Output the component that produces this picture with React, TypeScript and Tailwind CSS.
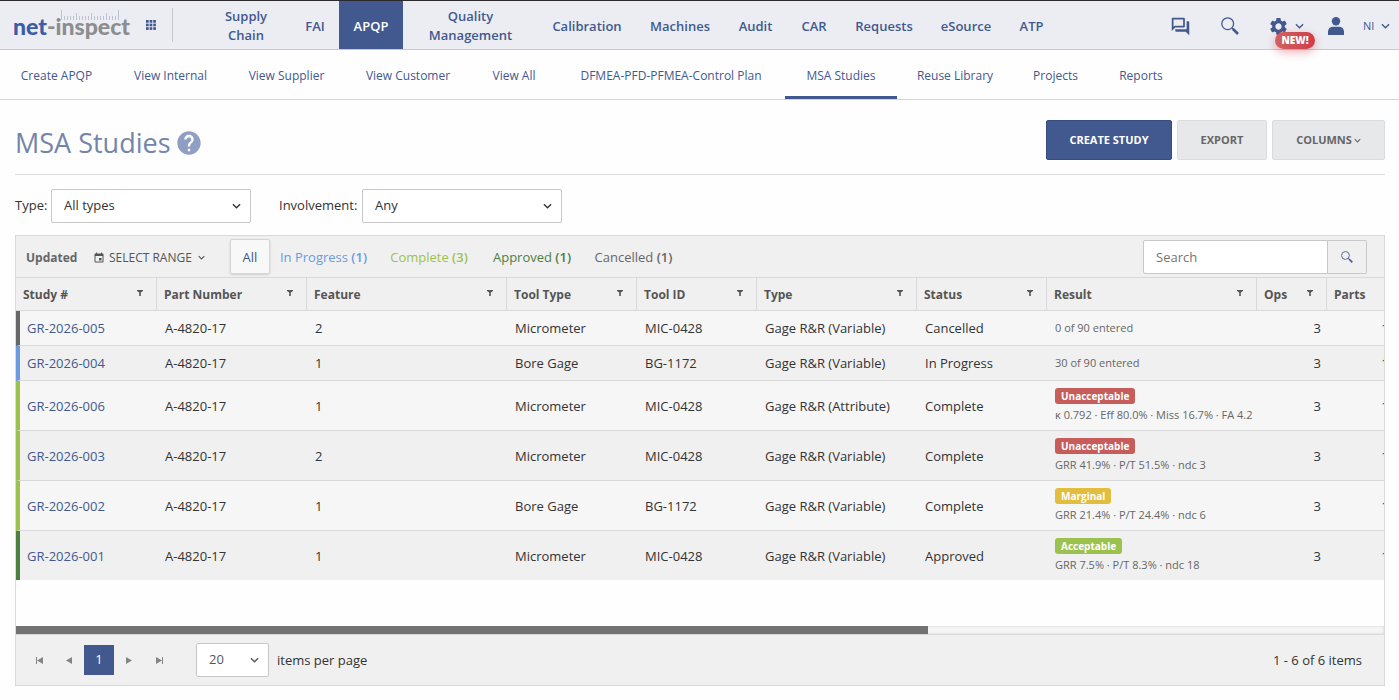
import { useState } from "react";
import clsx from "clsx";
import { MdEvent, MdHelp, MdOutlineQuestionAnswer, MdSettings } from "react-icons/md";

const mainNav = [
  { label: "Supply Chain", width: "w-[90px] px-5" },
  { label: "FAI", width: "w-12" },
  { label: "APQP", width: "w-16" },
  { label: "Quality Management", width: "w-[135px] px-5" },
  { label: "Calibration", width: "w-[98px]" },
  { label: "Machines", width: "w-[88px]" },
  { label: "Audit", width: "w-[63px]" },
  { label: "CAR", width: "w-[54px]" },
  { label: "Requests", width: "w-[86px]" },
  { label: "eSource", width: "w-[78px]" },
  { label: "ATP", width: "w-[53px]" },
];

const subNav = [
  { label: "Create APQP", width: "w-[113px]" },
  { label: "View Internal", width: "w-[115px]" },
  { label: "View Supplier", width: "w-[117px]" },
  { label: "View Customer", width: "w-[126px]" },
  { label: "View All", width: "w-[86px]" },
  { label: "DFMEA-PFD-PFMEA-Control Plan", width: "w-[228px]" },
  { label: "MSA Studies", width: "w-[112px]" },
  { label: "Reuse Library", width: "w-[116px]" },
  { label: "Projects", width: "w-[85px]" },
  { label: "Reports", width: "w-[86px]" },
];

const statusFilters = [
  { label: "All", count: null, style: "w-10 text-[#42598f]" },
  { label: "In Progress", count: 1, style: "w-[107px] text-[#6b9ade]" },
  { label: "Complete", count: 3, style: "w-[104px] text-[#9cc24e]" },
  { label: "Approved", count: 1, style: "w-[102px] text-[#4c803e]" },
  { label: "Cancelled", count: 1, style: "w-[101px] text-[#666666]" },
];

const columns = [
  { label: "Study #", width: "w-[140px]" },
  { label: "Part Number", width: "w-[150px]" },
  { label: "Feature", width: "w-[200px]" },
  { label: "Tool Type", width: "w-[130px]" },
  { label: "Tool ID", width: "w-[120px]" },
  { label: "Type", width: "w-[160px]" },
  { label: "Status", width: "w-[130px]" },
  { label: "Result", width: "w-[210px]" },
  { label: "Ops", width: "w-[70px]" },
  { label: "Parts", width: "w-[80px]" },
];

type Study = {
  id: string;
  feature: number;
  toolType: string;
  toolId: string;
  type: string;
  status: "Cancelled" | "In Progress" | "Complete" | "Approved";
  verdict?: "Unacceptable" | "Marginal" | "Acceptable";
  result: string;
};

const studies: Study[] = [
  { id: "GR-2026-005", feature: 2, toolType: "Micrometer", toolId: "MIC-0428", type: "Gage R&R (Variable)", status: "Cancelled", result: "0 of 90 entered" },
  { id: "GR-2026-004", feature: 1, toolType: "Bore Gage", toolId: "BG-1172", type: "Gage R&R (Variable)", status: "In Progress", result: "30 of 90 entered" },
  { id: "GR-2026-006", feature: 1, toolType: "Micrometer", toolId: "MIC-0428", type: "Gage R&R (Attribute)", status: "Complete", verdict: "Unacceptable", result: "κ 0.792 · Eff 80.0% · Miss 16.7% · FA 4.2" },
  { id: "GR-2026-003", feature: 2, toolType: "Micrometer", toolId: "MIC-0428", type: "Gage R&R (Variable)", status: "Complete", verdict: "Unacceptable", result: "GRR 41.9% · P/T 51.5% · ndc 3" },
  { id: "GR-2026-002", feature: 1, toolType: "Bore Gage", toolId: "BG-1172", type: "Gage R&R (Variable)", status: "Complete", verdict: "Marginal", result: "GRR 21.4% · P/T 24.4% · ndc 6" },
  { id: "GR-2026-001", feature: 1, toolType: "Micrometer", toolId: "MIC-0428", type: "Gage R&R (Variable)", status: "Approved", verdict: "Acceptable", result: "GRR 7.5% · P/T 8.3% · ndc 18" },
];

const statusBar = {
  Cancelled: "border-l-[#666666]",
  "In Progress": "border-l-[#6b9ade]",
  Complete: "border-l-[#9cc24e]",
  Approved: "border-l-[#4c803e]",
};

const verdictColor = {
  Unacceptable: "bg-[#c75d5b]",
  Marginal: "bg-[#e2bd3f]",
  Acceptable: "bg-[#9cc24e]",
};

function Chevron({ className }: { className?: string }) {
  return (
    <svg viewBox="0 0 10 6" fill="none" stroke="currentColor" strokeWidth="1.5" className={clsx("shrink-0", className)}>
      <path d="M1 1l4 4 4-4" />
    </svg>
  );
}

function SearchIcon({ className }: { className?: string }) {
  return (
    <svg viewBox="0 0 18 18" fill="none" stroke="currentColor" className={className}>
      <circle cx="6.7" cy="6.7" r="5.9" strokeWidth="1.3" />
      <path d="M11 11l1.6 1.6" strokeWidth="1.5" />
      <path d="M12 12l5 5" strokeWidth="2.6" />
    </svg>
  );
}

function FilterIcon() {
  return (
    <svg viewBox="0 0 6 6" fill="currentColor" className="h-[6px] w-[6px]">
      <path d="M0 0h6v1L3.800 2.600V6H2.200V2.600L0 1z" />
    </svg>
  );
}

function Logo() {
  return (
    <a href="#" aria-label="net-inspect" className="relative block w-[116px] pt-px font-['Lato','Open_Sans',sans-serif] text-[23px] leading-[26px] font-black whitespace-nowrap text-[#8b8d90]">
      <svg viewBox="0 0 60 10" shapeRendering="crispEdges" className="absolute top-[-2px] left-[47px] h-[10px] w-[60px] fill-[#bcc3d3]">
        {Array.from({ length: 20 }, (_, i) => {
          const h = i === 0 || i === 19 ? 10 : i % 5 === 0 ? 7 : 4;
          return <rect key={i} x={i * 3 + 1} y={10 - h} width="1" height={h} />;
        })}
      </svg>
      <span className="text-[#3c5ca8]">net</span>-inspect
    </a>
  );
}

function Header() {
  return (
    <header className="flex h-[50px] border-t border-b border-t-[#2d2a2e] border-b-[#c8c9cc] bg-[#ecedf3] text-[#42598f]">
      <div className="flex w-[201px] shrink-0 items-center pl-[13px]">
        <Logo />
        <button type="button" aria-label="Applications" className="ml-[17px]">
          <svg viewBox="0 0 10 10" fill="currentColor" className="h-[10px] w-[10px]">
            {[0, 1, 2].map((row) =>
              [0, 1, 2].map((col) => (
                <rect key={`${row}-${col}`} x={col * 3.6} y={row * 3.6} width="2.7" height="2.7" />
              ))
            )}
          </svg>
        </button>
        <span className="ml-4 h-[34px] w-px bg-[#c8c9cc]" />
      </div>
      <nav aria-label="Main" className="flex">
        {mainNav.map((item) => (
          <a
            key={item.label}
            href="#"
            className={clsx(
              "flex items-center justify-center pt-[2px] text-center text-[13px] leading-[19px] font-semibold",
              item.width,
              item.label === "APQP" && "bg-[#42598f] text-white"
            )}
          >
            {item.label}
          </a>
        ))}
      </nav>
      <div className="ml-auto flex shrink-0">
        <button type="button" aria-label="Messages" className="flex w-[50px] items-center justify-center pt-[2px]">
          <MdOutlineQuestionAnswer size={21} />
        </button>
        <button type="button" aria-label="Search" className="flex w-[50px] items-center justify-center pt-[2px]">
          <SearchIcon className="h-[18px] w-[18px]" />
        </button>
        <button type="button" aria-label="Settings" className="relative flex w-[58px] items-center justify-center gap-[6px] pt-[2px] pl-1">
          <MdSettings size={21} />
          <Chevron className="h-[6px] w-[9px]" />
          <span className="absolute top-[31px] left-[20px] z-10 flex h-[17px] w-10 items-center justify-center rounded-full bg-linear-to-r from-[#cf6361] to-[#d03a49] text-[10px] font-extrabold text-white shadow-[0_3px_10px_rgba(220,53,69,0.4)]">
            NEW!
          </span>
        </button>
        <button type="button" aria-label="Profile" className="flex w-[46px] items-center justify-center pt-[2px]">
          <svg viewBox="0 0 16 18" fill="currentColor" className="h-[18px] w-4">
            <circle cx="8" cy="4.2" r="4.2" />
            <path d="M0 18v-3c0-3.400 2.400-5.200 5-5.200h6c2.600 0 5 1.800 5 5.200v3z" />
          </svg>
        </button>
        <button type="button" className="flex w-10 items-center gap-[7px] pt-[2px] pl-1 text-[11px]">
          NI
          <Chevron className="h-[6px] w-[9px]" />
        </button>
      </div>
    </header>
  );
}

function SelectBox({ id, options, className }: { id: string; options: string[]; className: string }) {
  return (
    <div className={clsx("relative", className)}>
      <select id={id} className="h-[34px] w-full appearance-none rounded-[2px] border border-[#c8c8c8] bg-white pl-3 text-[13px]">
        {options.map((o) => (
          <option key={o}>{o}</option>
        ))}
      </select>
      <Chevron className="pointer-events-none absolute top-[14px] right-[10px] h-[6px] w-[9px]" />
    </div>
  );
}

function StudyTable() {
  const cell = "pt-[2px] pl-[9px]";

  return (
    <div className="h-[348px] overflow-hidden">
      <table className="w-[1390px] min-w-full table-fixed border-separate border-spacing-0 text-[13px]">
        <thead>
          <tr className="h-[33px]">
            {columns.map((col, i) => (
              <th
                key={col.label}
                className={clsx(
                  "border-b border-[#d9d9d9] bg-[#f0f0f0] p-0 text-left text-[12px] font-bold text-[#555555]",
                  col.width,
                  i > 0 && "border-l"
                )}
              >
                <div className="flex items-center justify-between pt-[2px] pr-[13px] pl-[7px]">
                  {col.label}
                  <button type="button" aria-label={`Filter ${col.label}`} className="pb-1">
                    <FilterIcon />
                  </button>
                </div>
              </th>
            ))}
          </tr>
        </thead>
        <tbody className="[&_td]:border-b [&_td]:border-b-[#d9d9d9] [&_td]:whitespace-nowrap [&_tr:last-child_td]:border-b-0">
          {studies.map((s) => (
            <tr key={s.id} className={clsx("odd:bg-[#f6f6f6] even:bg-[#f0f0f0] last:h-[49px]", s.verdict ? "h-[50px]" : "h-[35px]")}>
              <td className={clsx("border-l-4 pt-[2px] pl-[7px]", statusBar[s.status])}>
                <a href="#" className="text-[#42598f]">{s.id}</a>
              </td>
              <td className={cell}>A-4820-17</td>
              <td className={cell}>{s.feature}</td>
              <td className={cell}>{s.toolType}</td>
              <td className={cell}>{s.toolId}</td>
              <td className={cell}>{s.type}</td>
              <td className={cell}>{s.status}</td>
              <td className="overflow-hidden pl-[9px] text-[11px] text-[#666666]">
                {s.verdict && (
                  <span className={clsx("mb-[3px] block w-fit rounded-[3px] px-[6px] text-[10px] leading-4 font-bold text-white", verdictColor[s.verdict])}>
                    {s.verdict}
                  </span>
                )}
                <span className="block leading-4">{s.result}</span>
              </td>
              <td className="pt-[2px] pr-[5px] text-right">3</td>
              <td className="pt-[2px] pr-[10px] text-right">10</td>
            </tr>
          ))}
        </tbody>
      </table>
    </div>
  );
}

function PageButton({ label, d }: { label: string; d: string }) {
  return (
    <button type="button" aria-label={label} className="flex h-[30px] w-[30px] items-center justify-center text-[#858585]">
      <svg viewBox="0 0 7 7" fill="currentColor" className="h-[7px] w-[7px]">
        <path d={d} />
      </svg>
    </button>
  );
}

export default function App() {
  const [filter, setFilter] = useState("All");
  const [query, setQuery] = useState("");

  return (
    <div className="min-h-screen bg-[#fefefe] font-['Open_Sans','Noto_Sans',sans-serif] text-[13px] text-[#333333]">
      <Header />

      <nav aria-label="APQP" className="flex h-[50px] border-b border-[#d4d5d8] text-[12px] text-[#42598f]">
        {subNav.map((item) => (
          <a
            key={item.label}
            href="#"
            className={clsx(
              "flex items-center justify-center border-b-[3px] pt-[5px] whitespace-nowrap",
              item.width,
              item.label === "MSA Studies" ? "border-[#42598f]" : "border-transparent"
            )}
          >
            {item.label}
          </a>
        ))}
      </nav>

      <main className="pr-[14px] pl-[15px]">
        <div className="flex h-[75px] items-center justify-between border-b border-[#d9d9d9] pt-[6px]">
          <div className="flex items-center gap-1 pt-[6px]">
            <h1 className="text-[27px] text-[#7485aa]">MSA Studies</h1>
            <button type="button" aria-label="Help" className="text-[#8f9fc3]">
              <MdHelp size={28} />
            </button>
          </div>
          <div className="flex gap-[5px] text-[11px] font-bold">
            <button type="button" className="h-10 w-[126px] rounded-[2px] border border-[#384c7d] bg-[#42598f] text-white">
              CREATE STUDY
            </button>
            <button type="button" className="h-10 w-[90px] rounded-[2px] border border-[#dadbdd] bg-[#e7e8ea] text-[#666666]">
              EXPORT
            </button>
            <button type="button" className="flex h-10 w-[113px] items-center justify-center gap-[2px] rounded-[2px] border border-[#dadbdd] bg-[#e7e8ea] text-[#666666]">
              COLUMNS
              <Chevron className="h-[5px] w-[7px]" />
            </button>
          </div>
        </div>

        <div className="flex items-center pt-[14px] pb-3">
          <label htmlFor="study-type" className="w-9">Type:</label>
          <SelectBox id="study-type" options={["All types", "Variable", "Attribute"]} className="w-[200px]" />
          <label htmlFor="involvement" className="ml-7 w-[83px]">Involvement:</label>
          <SelectBox id="involvement" options={["Any", "Internal", "Supplier"]} className="w-[200px]" />
        </div>

        <section className="border border-[#d9d9d9]">
          <div className="flex h-[42px] items-center border-b border-[#d9d9d9] bg-[#f0f0f0] pr-[17px] pl-[10px]">
            <span className="w-[67px] pt-[2px] text-[12px] font-bold text-[#666666]">Updated</span>
            <button type="button" className="flex w-[137px] items-center gap-1 pt-[2px] text-[12px] text-[#555555]">
              <MdEvent size={12} />
              SELECT RANGE
              <Chevron className="ml-[2px] h-[5px] w-[7px]" />
            </button>
            {statusFilters.map((f) => (
              <button
                key={f.label}
                type="button"
                onClick={() => setFilter(f.label)}
                className={clsx(
                  "h-[35px] rounded-[2px] border pt-[2px] whitespace-nowrap",
                  f.style,
                  filter === f.label ? "border-[#d4d4d4] bg-[#f8f8f8] shadow-sm" : "border-transparent"
                )}
              >
                {f.label} {f.count && <span className="font-semibold">({f.count})</span>}
              </button>
            ))}
            <div className="ml-auto flex">
              <input
                type="text"
                aria-label="Search studies"
                placeholder="Search"
                value={query}
                onChange={(e) => setQuery(e.target.value)}
                className="h-[34px] w-[185px] rounded-l-[2px] border border-[#c8c8c8] bg-white px-3 placeholder:text-[#757575]"
              />
              <button type="button" aria-label="Run search" className="flex h-[34px] w-[39px] items-center justify-center rounded-r-[2px] border border-l-0 border-[#c8c8c8] text-[#42598f]">
                <SearchIcon className="h-3 w-3" />
              </button>
            </div>
          </div>

          <StudyTable />

          <div className="h-2 bg-[#f6f6f6] shadow-[inset_0_0_3px_rgba(0,0,0,0.15)]">
            <div className="h-full w-2/3 bg-[#727272]" />
          </div>

          <div className="flex h-[51px] items-center border-t border-[#d9d9d9] bg-[#f0f0f0] pr-[22px] pl-2">
            <PageButton label="First page" d="M0 0h1v7H0zM7 0v7L1 3.500z" />
            <PageButton label="Previous page" d="M6 0v7L0 3.500z" />
            <button type="button" className="h-[30px] w-[30px] bg-[#42598f] text-white">1</button>
            <PageButton label="Next page" d="M0 0v7l6-3.500z" />
            <PageButton label="Last page" d="M0 0v7l6-3.500zM6 0h1v7H6z" />
            <label htmlFor="page-size" className="order-1 pt-[2px] pl-2">items per page</label>
            <SelectBox id="page-size" options={["20", "50", "100"]} className="ml-[22px] w-[73px] text-[#555555]" />
            <span className="order-2 ml-auto pt-[2px]">1 - 6 of 6 items</span>
          </div>
        </section>
      </main>
    </div>
  );
}
